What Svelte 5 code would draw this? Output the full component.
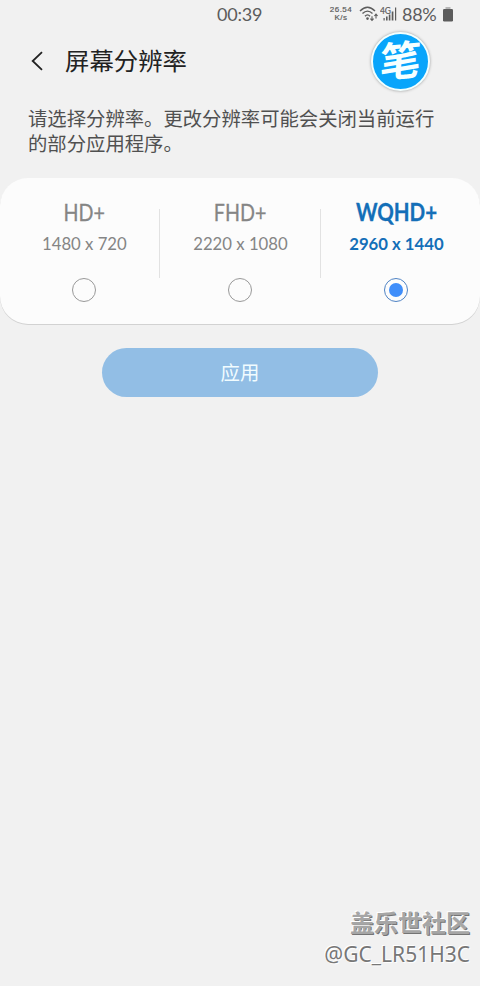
<script>
  const options = [
    { name: 'HD+', size: '1480 x 720', key: 'hd' },
    { name: 'FHD+', size: '2220 x 1080', key: 'fhd' },
    { name: 'WQHD+', size: '2960 x 1440', key: 'wqhd' }
  ];
  let selected = $state('wqhd');
</script>

<div class="screen">
  <div class="status">
    <span class="time">00:39</span>
    <div class="indicators">
      <div class="speed"><span>26.54</span><span>K/s</span></div>
      <svg class="wifi" width="20" height="16" viewBox="0 0 20 16" fill="none" stroke="#5c5c5c" stroke-width="1.4">
        <path d="M1 5Q8.5-2.6 16 5M3.5 7.6Q8.5 2.6 13.5 7.6M6 10.2Q8.5 7.6 11 10.2" />
        <circle cx="8.5" cy="12.6" r="1.3" fill="#5c5c5c" stroke="none" />
        <path d="M13 10.2v4M11.4 12.6l1.6 1.8 1.6-1.8M17 12.6V8.2M15.4 10l1.6-1.8 1.6 1.8" stroke-width="1.1" />
      </svg>
      <svg class="signal" width="18" height="16" viewBox="0 0 18 16" fill="#5c5c5c">
        <text x="0" y="7.6" font-size="9" textLength="11" lengthAdjust="spacingAndGlyphs">4G</text>
        <path d="M3.5 12h1.2v2.5H3.5zM6 10.5h1.6v4H6zM8.8 8.5h1.6v6H8.8zM11.7 5.5h1.7v9h-1.7zM15 1.5h1.2v13H15z" />
      </svg>
      <span class="percent">88%</span>
      <svg class="battery" width="10" height="15" viewBox="0 0 10 15">
        <path d="M2.5 0h5v2h-5z" fill="#b5b5b5" />
        <rect y="2" width="10" height="12.5" rx="1.2" fill="#5c5c5c" />
      </svg>
    </div>
  </div>

  <header>
    <svg class="back" width="12" height="20" viewBox="0 0 12 20" fill="none" stroke="#222" stroke-width="1.8">
      <path d="M11 1.2L1.7 10 11 18.8" />
    </svg>
    <h1>屏幕分辨率</h1>
    <div class="badge"><span>笔</span></div>
  </header>

  <p class="hint">请选择分辨率。更改分辨率可能会关闭当前运行<br />的部分应用程序。</p>

  <section class="card">
    {#each options as o}
      <button class="option {o.key}" class:active={selected === o.key} onclick={() => (selected = o.key)}>
        <span class="name">{o.name}</span>
        <span class="size">{o.size}</span>
        <span class="radio"></span>
      </button>
    {/each}
  </section>

  <button class="apply">应用</button>

  <footer>
    <div class="community">盖乐世社区</div>
    <div class="author">@GC_LR51H3C</div>
  </footer>
</div>

<style>
  :global(body) { background: #f1f1f1; }
  .screen {
    width: 480px;
    height: 986px;
    box-sizing: border-box;
    display: flex;
    flex-direction: column;
    overflow: hidden;
    background: #f1f1f1;
    font-family: Lato, "Noto Sans CJK SC", sans-serif;
  }
  svg { display: block; flex: none; }
  button { border: 0; padding: 0; font: inherit; cursor: pointer; }
  .status {
    height: 28px;
    flex: none;
    display: flex;
    justify-content: space-between;
    padding: 0 27px 0 217px;
    color: #5c5c5c;
    font-size: 18px;
    line-height: 28px;
  }
  .time { letter-spacing: -0.2px; }
  .indicators { display: flex; align-items: center; }
  .speed {
    width: 24px;
    display: flex;
    flex-direction: column;
    align-items: center;
    font-family: "Liberation Sans", sans-serif;
    font-size: 8px;
    line-height: 8px;
    letter-spacing: 0.5px;
    -webkit-text-stroke: 0.2px;
    margin-right: 6px;
  }
  .wifi { margin-right: 1px; }
  .signal { margin-right: 4px; }
  .signal text { stroke: #5c5c5c; stroke-width: 0.2px; }
  .percent { width: 41px; font-size: 18px; letter-spacing: -0.3px; }
  header {
    height: 66px;
    flex: none;
    display: flex;
    align-items: center;
    padding: 0 50px 0 31px;
    box-sizing: border-box;
  }
  h1 {
    margin: 0 0 0 22px;
    font-size: 24.4px;
    line-height: 30px;
    font-weight: 400;
    color: #222;
    flex: 1;
  }
  .badge {
    width: 55px;
    height: 55px;
    border: 2.5px solid #f2ffff;
    border-radius: 50%;
    background: #08a5fb;
    color: #f7ffff;
    box-shadow: 0 0 3px #999;
    display: flex;
    align-items: center;
    justify-content: center;
    font-size: 41px;
    font-weight: 700;
    line-height: 50px;
  }
  .badge span { transform: rotate(-6deg) skewX(-9deg); }
  .hint {
    margin: 12px 0 0 28px;
    font-size: 19.35px;
    line-height: 25px;
    white-space: nowrap;
    color: #505050;
  }
  .card {
    height: 146px;
    margin-top: 22px;
    flex: none;
    box-sizing: border-box;
    display: flex;
    padding: 0 8px;
    background: #fcfcfc;
    border-radius: 28px;
    box-shadow: 0 1px 0 #d2d2d2;
  }
  .option {
    width: 152px;
    display: flex;
    flex-direction: column;
    align-items: center;
    color: #858585;
    background: linear-gradient(#e2e2e2, #e2e2e2) right 31px / 1px 69px no-repeat;
  }
  .option.fhd { width: 161px; margin-right: -1px; padding-right: 1px; }
  .option.wqhd { background: none; }
  .name {
    margin-top: 19px;
    font-size: 24px;
    line-height: 30px;
    height: 30px;
    transform: scaleX(0.82);
    -webkit-text-stroke: 0.3px;
  }
  .active .name { transform: scaleX(0.855); }
  .size { margin-top: 5px; font-size: 17.5px; line-height: 24px; height: 24px; transform: scaleX(0.955); }
  .active .name, .active .size { color: #146fb8; font-weight: 700; }
  .radio {
    width: 24px;
    height: 24px;
    box-sizing: border-box;
    border: 1px solid #999;
    border-radius: 50%;
    margin-top: 22px;
    display: flex;
    align-items: center;
    justify-content: center;
  }
  .active .radio { border-color: #4f83c4; }
  .active .radio::after { content: ""; width: 14px; height: 14px; border-radius: 50%; background: #3f8efa; }
  .apply {
    width: 276px;
    height: 49px;
    flex: none;
    margin: 24px 0 0 102px;
    border-radius: 25px;
    background: #92bee5;
    color: #f1fcff;
    font-size: 19.4px;
    line-height: 48px;
    font-weight: 400;
  }
  footer {
    margin-top: auto;
    padding: 0 10px 17px 0;
    text-align: right;
    color: #777;
  }
  .community {
    font-size: 24px;
    line-height: 32px;
    font-weight: 700;
    color: #a6a6a6;
    text-shadow: -1px -1px 0 #fff, 1px 1px 0 #747474;
  }
  .author {
    font-family: "Noto Sans", sans-serif;
    font-size: 21px;
    line-height: 30px;
    text-shadow: -1px -1px 0 #fff, 1px 1px 1px #fff;
  }
</style>
